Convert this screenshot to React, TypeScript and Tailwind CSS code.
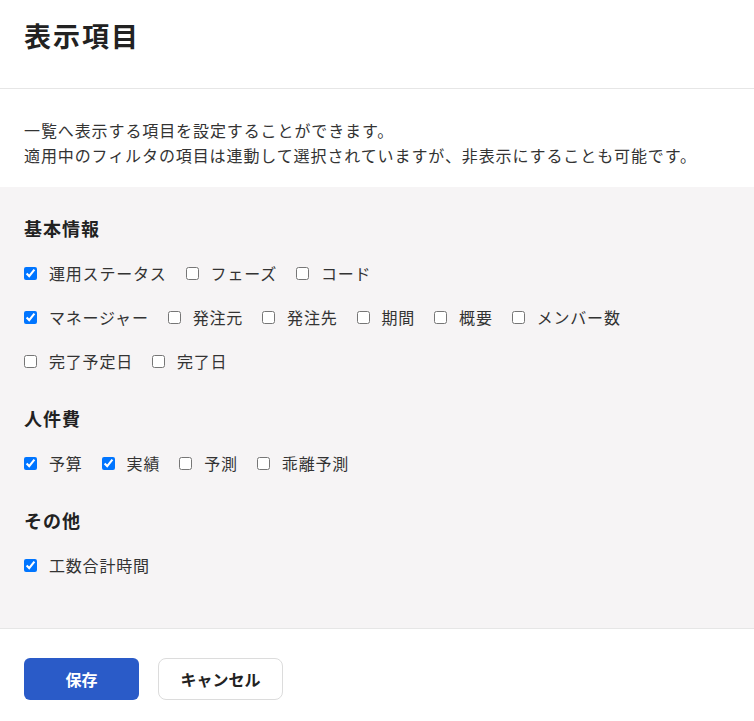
import { useState } from 'react'

type Item = { label: string; checked: boolean }
type Group = { title: string; rows: Item[][] }

const initialGroups: Group[] = [
  {
    title: '基本情報',
    rows: [
      [
        { label: '運用ステータス', checked: true },
        { label: 'フェーズ', checked: false },
        { label: 'コード', checked: false },
      ],
      [
        { label: 'マネージャー', checked: true },
        { label: '発注元', checked: false },
        { label: '発注先', checked: false },
        { label: '期間', checked: false },
        { label: '概要', checked: false },
        { label: 'メンバー数', checked: false },
      ],
      [
        { label: '完了予定日', checked: false },
        { label: '完了日', checked: false },
      ],
    ],
  },
  {
    title: '人件費',
    rows: [
      [
        { label: '予算', checked: true },
        { label: '実績', checked: true },
        { label: '予測', checked: false },
        { label: '乖離予測', checked: false },
      ],
    ],
  },
  {
    title: 'その他',
    rows: [[{ label: '工数合計時間', checked: true }]],
  },
]

export default function App() {
  const [groups, setGroups] = useState(initialGroups)

  const toggle = (g: number, r: number, i: number) => {
    setGroups((prev) =>
      prev.map((group, gi) =>
        gi !== g
          ? group
          : {
              ...group,
              rows: group.rows.map((row, ri) =>
                ri !== r ? row : row.map((item, ii) => (ii !== i ? item : { ...item, checked: !item.checked }))
              ),
            }
      )
    )
  }

  return (
    <div
      className="w-[754px] h-[721px] bg-white text-[#333] flex flex-col"
      style={{ fontFamily: '"Noto Sans CJK JP", "Noto Sans", sans-serif' }}
    >
      {/* Header */}
      <div className="h-[89px] shrink-0 border-b border-[#e6e6e6] px-6 pt-[15px]">
        <h1 className="text-[27px] leading-[42px] font-bold tracking-[2px] text-[#222]">表示項目</h1>
      </div>

      {/* Description */}
      <div className="px-6 pt-[29px] pb-[19px] text-base leading-[25px] tracking-[0.9px]">
        <p>一覧へ表示する項目を設定することができます。</p>
        <p>適用中のフィルタの項目は連動して選択されていますが、非表示にすることも可能です。</p>
      </div>

      {/* Column settings */}
      <div className="flex-1 bg-[#f6f4f5] px-6 pt-[28px] border-b border-[#e6e6e6] flex flex-col gap-8">
        {groups.map((group, g) => (
          <section key={group.title}>
            <h3 className="text-[18px] leading-[27px] font-bold tracking-[1px] text-[#222]">{group.title}</h3>
            <div className="mt-[19px] flex flex-col gap-5">
              {group.rows.map((row, r) => (
                <div key={r} className="flex items-center gap-[19px] h-6">
                  {row.map((item, i) => (
                    <label key={item.label} className="flex items-center gap-3 cursor-pointer">
                      <input
                        type="checkbox"
                        checked={item.checked}
                        onChange={() => toggle(g, r, i)}
                        className="w-[13px] h-[13px]"
                      />
                      <span className="text-base leading-6 tracking-[0.8px]">{item.label}</span>
                    </label>
                  ))}
                </div>
              ))}
            </div>
          </section>
        ))}
      </div>

      {/* Footer */}
      <div className="shrink-0 h-[92px] px-6 pt-[29px] flex items-start gap-[19px]">
        <button className="w-[115px] h-[42px] rounded-md bg-[#2a5bc8] text-white font-bold text-base">保存</button>
        <button className="w-[125px] h-[42px] rounded-lg border border-[#dcdcdc] bg-white text-[#222] font-bold text-base">
          キャンセル
        </button>
      </div>
    </div>
  )
}
